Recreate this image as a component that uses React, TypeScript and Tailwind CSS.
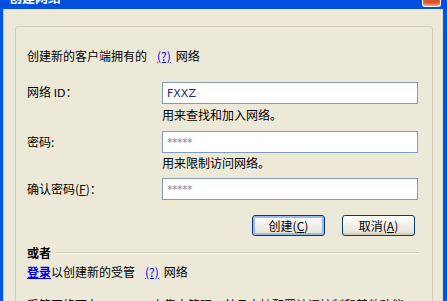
import React from "react";

const cjk = { fontFamily: '"Noto Sans CJK SC", "Liberation Sans", sans-serif' };

function XpInput({ value, password }: { value: string; password?: boolean }) {
  return (
    <div className="h-[22px] w-[256px] border border-[#7f9db9] bg-white flex items-center pl-[4px]">
      {password ? (
        <span
          className="text-[11px] leading-none tracking-[-0.5px] text-[#8a7fa0] mt-[1px]"
          style={{ fontFamily: '"DejaVu Sans", sans-serif' }}
        >
          *****
        </span>
      ) : (
        <span
          className="text-[11px] leading-none text-[#1c2a6b]"
          style={{ fontFamily: '"DejaVu Sans", "Liberation Sans", sans-serif' }}
        >
          {value}
        </span>
      )}
    </div>
  );
}

function XpButton({ label, hotkey, primary }: { label: string; hotkey: string; primary?: boolean }) {
  return (
    <button
      className={
        "h-[21px] w-[73px] rounded-[3px] border border-[#003c74] bg-linear-to-b from-white to-[#e3e0d2] text-[12px] leading-none text-black flex items-center justify-center " +
        (primary ? "shadow-[inset_0_0_0_2px_#9cb9ec]" : "shadow-[inset_0_-2px_0_#d6d0c0]")
      }
      style={cjk}
    >
      {label}(<span className="underline">{hotkey}</span>)
    </button>
  );
}

export default function App() {
  return (
    <div className="w-[447px] h-[301px] overflow-hidden bg-[#0055e5] flex flex-col" style={cjk}>
      {/* title bar, mostly scrolled off the top */}
      <div className="h-[9px] min-h-[9px] w-full shrink-0 flex flex-row bg-[#0050e0]">
        <div className="pl-[9px] h-[9px] overflow-hidden">
          <div className="text-[13px] font-bold text-white leading-[16px] -mt-[11px]">创建网络</div>
        </div>
        <div className="flex-1" />
        <div className="mr-[6px] w-[19px] h-[7px] rounded-b-[3px] border-x border-b border-white bg-[#e0502a] shadow-[inset_0_-2px_2px_#f0a080]" />
      </div>

      <div className="flex-1 min-h-0 flex bg-[#ece9d8] ml-[3px] mr-[4px] border-l border-[#c9c5b4] overflow-hidden">
        <div className="ml-[11px] mt-[17px] w-[418px] h-[320px] shrink-0 rounded-[3px] border border-[#d0ccb8] pl-[11px] text-[12px] leading-[16px] text-black">
          <div className="mt-[21px] flex items-center">
            <span>创建新的客户端拥有的</span>
            <span className="ml-[10px] text-[#0000ee] underline">(?)</span>
            <span className="ml-[5px]">网络</span>
          </div>

          <div className="mt-[18px] grid grid-cols-[135px_256px] items-center">
            <span>
              网络 <span style={{ fontFamily: '"DejaVu Sans", sans-serif' }} className="text-[11px]">ID</span>：
            </span>
            <XpInput value="FXXZ" />
            <span />
            <span className="mt-[3px]">用来查找和加入网络。</span>

            <span className="mt-[8px]">密码:</span>
            <div className="mt-[8px]">
              <XpInput value="" password />
            </div>
            <span />
            <span className="mt-[2px]">用来限制访问网络。</span>

            <span className="mt-[7px]">
              确认密码(<span className="underline">F</span>)：
            </span>
            <div className="mt-[7px]">
              <XpInput value="" password />
            </div>
          </div>

          <div className="mt-[15px] w-[391px] flex justify-end gap-[17px] pr-[3px]">
            <XpButton label="创建" hotkey="C" primary />
            <XpButton label="取消" hotkey="A" />
          </div>

          <div className="mt-[9px] w-[391px] flex items-center">
            <span className="font-bold">或者</span>
            <div className="flex-1 ml-[5px] h-[2px] border-t border-[#d0ccb8] border-b-white border-b" />
          </div>

          <div className="mt-[3px] flex items-center">
            <span className="text-[#0000ee] underline font-bold">登录</span>
            <span>以创建新的受管</span>
            <span className="ml-[10px] text-[#0000ee] underline">(?)</span>
            <span className="ml-[5px]">网络</span>
          </div>

          <div className="mt-[17px] whitespace-nowrap">
            受管网络可在 LogMeIn 上集中管理，并且支持配置访问控制和其他功能。
          </div>
        </div>
        <div className="ml-auto w-[1px] bg-[#e2dfd0]" />
      </div>
    </div>
  );
}
